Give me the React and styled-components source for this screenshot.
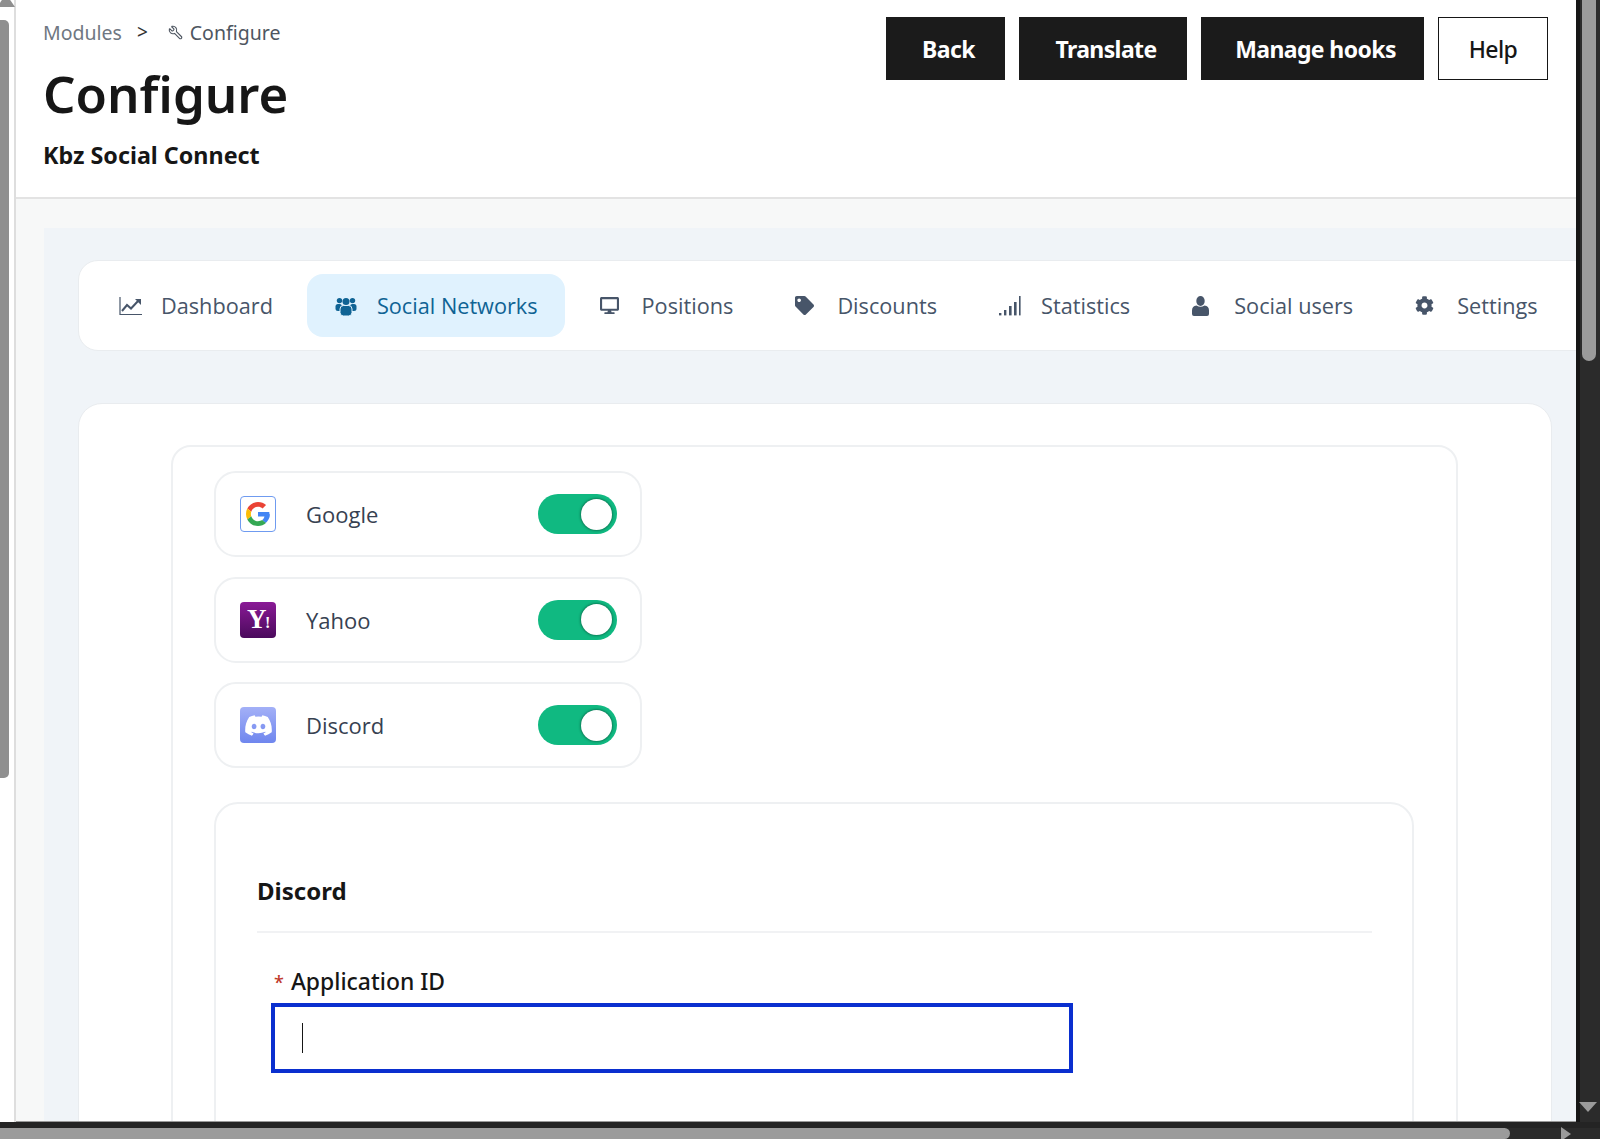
import React from 'react';
import styled, { createGlobalStyle } from 'styled-components';
import { FaDesktop, FaTag, FaCog } from 'react-icons/fa';
import { FaDiscord } from 'react-icons/fa6';
import { Wrench } from 'lucide-react';

const Global = createGlobalStyle`
  html, body { margin: 0; padding: 0; height: 1139px; overflow: hidden; background: #fff; }
  * { box-sizing: border-box; }
  #root { height: 1139px; }
`;

const Frame = styled.div`
  display: grid;
  grid-template-columns: 16px 1fr 24px;
  grid-template-rows: 1122px 17px;
  width: 1600px;
  height: 1139px;
  font-family: "Noto Sans", "Open Sans", sans-serif;
  overflow: hidden;
`;
const LeftRail = styled.div`
  position: relative;
  background: #fff;
  border-right: 2px solid #dedede;
`;
const LeftThumb = styled.div`
  position: absolute;
  left: 0;
  top: 20px;
  width: 9px;
  height: 758px;
  background: #8f8f8f;
  border-radius: 0 5px 5px 0;
`;
const UpArrow = styled.div`
  position: absolute;
  left: -3px;
  top: -6px;
  width: 0;
  height: 0;
  border-left: 9px solid transparent;
  border-right: 9px solid transparent;
  border-bottom: 13px solid #8f8f8f;
`;
const RightRail = styled.div`
  position: relative;
  background: #2b2b2b;
  border-left: 4px solid #161616;
`;
const RightThumb = styled.div`
  position: absolute;
  left: 2px;
  top: -8px;
  width: 14px;
  height: 369px;
  background: #9b9b9b;
  border-radius: 0 0 7px 7px;
`;
const DownArrow = styled.div`
  position: absolute;
  right: 3px;
  bottom: 10px;
  width: 0;
  height: 0;
  border-left: 9px solid transparent;
  border-right: 9px solid transparent;
  border-top: 10px solid #9b9b9b;
`;
const BottomRail = styled.div`
  grid-column: 1 / 4;
  display: flex;
  align-items: stretch;
  justify-content: space-between;
  position: relative;
  background: #2b2b2b;
  border-top: 6px solid #242424;
`;
const BottomThumb = styled.div`
  width: 1510px;
  background: #9b9b9b;
  border-radius: 0 6px 6px 0;
`;
const RightArrow = styled.div`
  width: 0;
  height: 0;
  margin: 0 29px 0 0;
  align-self: center;
  border-top: 7px solid transparent;
  border-bottom: 7px solid transparent;
  border-left: 10px solid #9b9b9b;
`;

const Page = styled.main`
  min-width: 0;
  background: #f7f8f8;
  overflow: hidden;
  border-bottom: 1px solid #999;
`;
const Header = styled.header`
  height: 199px;
  background: #fff;
  border-bottom: 2px solid #e3e3e3;
  display: flex;
  justify-content: space-between;
  align-items: flex-start;
  padding: 16px 28px 0 27px;
  font-family: "Noto Sans", sans-serif;
`;
const TitleBlock = styled.div`
  display: flex;
  flex-direction: column;
`;
const Crumbs = styled.div`
  display: flex;
  align-items: center;
  height: 32px;
  font-size: 19.5px;
  color: #6f7782;
`;
const CrumbSep = styled.span`
  margin: 0 20px 0 15px;
  color: #333;
  font-size: 19px;
`;
const CrumbCurrent = styled.span`
  display: inline-flex;
  align-items: center;
  gap: 7px;
  color: #4e5661;
`;
const Title = styled.h1`
  margin: 13px 0 0;
  font-size: 51px;
  line-height: 64px;
  font-weight: 600;
  color: #161616;
`;
const Subtitle = styled.div`
  margin-top: 15px;
  font-size: 23.3px;
  line-height: 30px;
  font-weight: 700;
  color: #161616;
`;
const Actions = styled.div`
  display: flex;
  gap: 14px;
  padding-top: 1px;
`;
const ActionButton = styled.button`
  height: 63px;
  width: ${p => p.$w}px;
  padding: 0 0 0 ${p => (p.$light ? 0 : 6)}px;
  font-family: inherit;
  font-size: 23px;
  font-weight: ${p => (p.$light ? 500 : 700)};
  letter-spacing: -0.6px;
  color: ${p => (p.$light ? '#161616' : '#fff')};
  background: ${p => (p.$light ? '#fff' : '#1b1b1b')};
  border: 1px solid ${p => (p.$light ? '#161616' : '#1b1b1b')};
  border-radius: 0;
`;

const Outer = styled.div`
  padding: 29px 0 0 28px;
`;
const Inner = styled.div`
  background: #f0f4f8;
  padding: 32px 24px 0 34px;
  height: 925px;
`;
const TabBar = styled.nav`
  display: flex;
  align-items: center;
  gap: 7px;
  height: 91px;
  margin-right: -40px;
  padding-left: 12px;
  background: #fff;
  border: 1px solid #e9ecef;
  border-radius: 20px 0 0 20px;
  font-family: "Open Sans", sans-serif;
`;
const Tab = styled.div`
  display: flex;
  align-items: center;
  flex: none;
  gap: 19px;
  height: 63px;
  padding: 0 27px 0 28px;
  border-radius: 16px;
  font-size: 21.7px;
  color: ${p => (p.$active ? '#0f6394' : '#475569')};
  background: ${p => (p.$active ? '#e0f2fe' : 'transparent')};
`;
const TabIcon = styled.span`
  display: flex;
  align-items: center;
  justify-content: flex-start;
  width: 23px;
  height: 24px;
  font-size: 19px;
`;
const Card = styled.section`
  margin-top: 52px;
  background: #fff;
  border: 1px solid #e9ecef;
  border-radius: 24px 24px 0 0;
  padding: 41px 93px 0 92px;
  height: 760px;
`;
const Panel = styled.div`
  border: 2px solid #eef0f2;
  border-radius: 20px 20px 0 0;
  padding: 24px 42px 0 41px;
  height: 720px;
  display: flex;
  flex-direction: column;
  gap: 19.5px;
`;
const Row = styled.div`
  display: flex;
  flex: none;
  align-items: center;
  width: 428px;
  height: 86px;
  padding: 0 23px 0 24px;
  border: 2px solid #eef0f2;
  border-radius: 22px;
  font-family: "Open Sans", sans-serif;
  font-size: 22px;
  color: #374151;
`;
const Logo = styled.span`
  flex: none;
  display: flex;
  align-items: center;
  justify-content: center;
  width: 36px;
  height: 36px;
  border-radius: 4px;
  border: ${p => (p.$outline ? '1px solid #6f9bf0' : 'none')};
  background: ${p => p.$bg || '#fff'};
  color: #fff;
`;
const YahooMark = styled.span`
  font-family: "Liberation Serif", serif;
  font-weight: 700;
  font-size: 27px;
  line-height: 1;
  letter-spacing: -1.5px;
`;
const YahooBang = styled.span`
  font-size: 16px;
`;
const RowLabel = styled.span`
  flex: 1;
  margin-left: 30px;
`;
const Toggle = styled.span`
  display: flex;
  justify-content: flex-end;
  align-items: center;
  width: 79px;
  height: 40px;
  padding-right: 5px;
  border-radius: 20px;
  background: #10b981;
`;
const Knob = styled.span`
  width: 31px;
  height: 31px;
  border-radius: 50%;
  background: #fff;
  box-shadow: 0 0 3px rgba(0, 0, 0, .65);
`;
const SubPanel = styled.div`
  margin-top: 14px;
  border: 2px solid #eef0f2;
  border-radius: 24px 24px 0 0;
  padding: 0 40px 0 41px;
  flex: 1;
`;
const SubTitle = styled.h3`
  margin: 0;
  height: 129px;
  padding-top: 67px;
  border-bottom: 2px solid #f1f2f4;
  font-size: 24px;
  line-height: 40px;
  font-weight: 700;
  color: #161616;
`;
const Field = styled.div`
  padding: 34px 0 0 14px;
`;
const FieldLabel = styled.label`
  display: flex;
  align-items: center;
  height: 36px;
  padding-bottom: 6px;
  font-size: 22.9px;
  font-weight: 500;
  color: #161616;
`;
const Star = styled.span`
  color: #c0392b;
  margin: 0 7px 0 3px;
  font-size: 18px;
`;
const InputBox = styled.div`
  display: flex;
  align-items: center;
  width: 802px;
  height: 70px;
  padding-left: 27px;
  border: 4px solid #0a2fcf;
  background: #fff;
`;
const Caret = styled.span`
  width: 1.2px;
  height: 30px;
  background: #161616;
`;

const ChartIcon = () => (
  <svg width="23" height="20" viewBox="0 0 23 20" fill="none" stroke="#475569">
    <path d="M1 1v17.5h22" strokeWidth="1.2" />
    <path d="M3 15l5-6 4 3.5L20 4" strokeWidth="2" />
    <path d="M16 3h6v6z" fill="#475569" stroke="none" />
  </svg>
);
const BarsIcon = () => (
  <svg width="22" height="20" viewBox="0 0 22 20" fill="#475569">
    <rect x="0" y="17" width="2.4" height="2.4" />
    <rect x="5" y="14" width="2.4" height="5.4" />
    <rect x="10" y="10" width="2.6" height="9.4" />
    <rect x="15" y="6" width="2.6" height="13.4" />
    <rect x="20" y="0" width="1.6" height="19.4" />
  </svg>
);
const GroupIcon = () => (
  <svg width="22" height="20" viewBox="0 0 22 20" fill="#0f6394">
    <circle cx="4.5" cy="4.6" r="2.7" />
    <circle cx="17.5" cy="4.6" r="2.7" />
    <circle cx="11" cy="5.4" r="3.5" />
    <rect x="0.5" y="8" width="6.5" height="7" rx="2.5" />
    <rect x="15" y="8" width="6.5" height="7" rx="2.5" />
    <rect x="5" y="9.5" width="12" height="10.5" rx="3.5" stroke="#e0f2fe" strokeWidth="1" />
  </svg>
);
const PersonIcon = () => (
  <svg width="17" height="20" viewBox="0 0 17 20" fill="#475569">
    <ellipse cx="8.5" cy="5" rx="4.2" ry="5" />
    <path d="M0 18v-3.5Q0 10 4.5 9.5Q8.5 12 12.5 9.5Q17 10 17 14.5V18q0 2-2 2H2q-2 0-2-2z" />
  </svg>
);
const GoogleIcon = () => (
  <svg width="24" height="24" viewBox="0 0 48 48">
    <path fill="#EA4335" d="M24 9.5c3.5 0 6.7 1.2 9.2 3.6l6.9-6.9C35.9 2.4 30.5 0 24 0 14.6 0 6.5 5.4 2.6 13.2l8 6.2C12.4 13.7 17.7 9.5 24 9.5z" />
    <path fill="#4285F4" d="M46.9 24.5c0-1.6-.1-3.1-.4-4.5H24v9h12.9c-.6 3-2.2 5.5-4.7 7.2l7.3 5.7c4.3-4 8.4-9.9 8.4-17.4z" />
    <path fill="#FBBC05" d="M10.5 28.6c-.5-1.4-.8-3-.8-4.6s.3-3.2.8-4.6l-8-6.2C.9 16.5 0 20.1 0 24s.9 7.5 2.6 10.8l7.9-6.2z" />
    <path fill="#34A853" d="M24 48c6.5 0 11.9-2.1 15.9-5.8l-7.7-6c-2.1 1.4-4.9 2.3-8.2 2.3-6.3 0-11.6-4.2-13.5-9.9l-8 6.2C6.5 42.6 14.6 48 24 48z" />
  </svg>
);

const tabs = [
  { label: 'Dashboard', icon: <ChartIcon /> },
  { label: 'Social Networks', icon: <GroupIcon />, active: true },
  { label: 'Positions', icon: <FaDesktop /> },
  { label: 'Discounts', icon: <FaTag /> },
  { label: 'Statistics', icon: <BarsIcon /> },
  { label: 'Social users', icon: <PersonIcon /> },
  { label: 'Settings', icon: <FaCog /> },
];

export default function App() {
  return (
    <Frame>
      <Global />
      <LeftRail>
        <UpArrow />
        <LeftThumb />
      </LeftRail>
      <Page>
        <Header>
          <TitleBlock>
            <Crumbs>
              <span>Modules</span>
              <CrumbSep>&gt;</CrumbSep>
              <CrumbCurrent>
                <Wrench size={15} strokeWidth={1.8} style={{ transform: 'scaleX(-1)' }} />
                Configure
              </CrumbCurrent>
            </Crumbs>
            <Title>Configure</Title>
            <Subtitle>Kbz Social Connect</Subtitle>
          </TitleBlock>
          <Actions>
            <ActionButton $w={119}>Back</ActionButton>
            <ActionButton $w={168}>Translate</ActionButton>
            <ActionButton $w={223}>Manage hooks</ActionButton>
            <ActionButton $w={110} $light>Help</ActionButton>
          </Actions>
        </Header>
        <Outer>
          <Inner>
            <TabBar>
              {tabs.map(t => (
                <Tab key={t.label} $active={t.active}>
                  <TabIcon>{t.icon}</TabIcon>
                  {t.label}
                </Tab>
              ))}
            </TabBar>
            <Card>
              <Panel>
                <Row>
                  <Logo $outline><GoogleIcon /></Logo>
                  <RowLabel>Google</RowLabel>
                  <Toggle><Knob /></Toggle>
                </Row>
                <Row>
                  <Logo $bg="linear-gradient(#8a1a96, #4a0a5c)">
                    <YahooMark>Y<YahooBang>!</YahooBang></YahooMark>
                  </Logo>
                  <RowLabel>Yahoo</RowLabel>
                  <Toggle><Knob /></Toggle>
                </Row>
                <Row>
                  <Logo $bg="linear-gradient(#a3b0f7, #6f86ee)"><FaDiscord size={29} /></Logo>
                  <RowLabel>Discord</RowLabel>
                  <Toggle><Knob /></Toggle>
                </Row>
                <SubPanel>
                  <SubTitle>Discord</SubTitle>
                  <Field>
                    <FieldLabel><Star>*</Star>Application ID</FieldLabel>
                    <InputBox><Caret /></InputBox>
                  </Field>
                </SubPanel>
              </Panel>
            </Card>
          </Inner>
        </Outer>
      </Page>
      <RightRail>
        <RightThumb />
        <DownArrow />
      </RightRail>
      <BottomRail>
        <BottomThumb />
        <RightArrow />
      </BottomRail>
    </Frame>
  );
}
